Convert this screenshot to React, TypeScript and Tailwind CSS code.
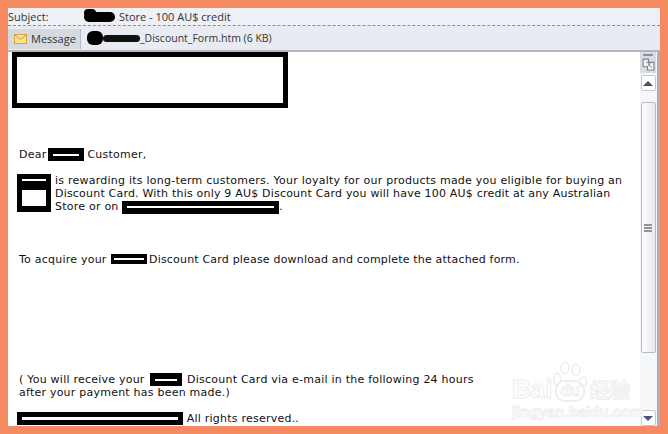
import React from "react";

const Bar = ({ w, h = 13, slit = 2, inset = 5 }: { w: number; h?: number; slit?: number; inset?: number }) => (
  <span
    className="inline-flex items-center bg-black align-middle"
    style={{ width: w, height: h, paddingLeft: inset, paddingRight: inset }}
  >
    <span className="block w-full bg-white" style={{ height: slit }} />
  </span>
);

export default function App() {
  return (
    <div className="w-[668px] h-[434px] bg-[#f58a63] pt-2 pl-2 pr-2 pb-2 overflow-hidden">
      <div className="relative flex h-[418px] flex-col overflow-hidden bg-[#e8ebf1] font-['Open_Sans',sans-serif] text-[#222]">
        <div className="flex h-[18px] items-center border-b border-dashed border-[#8a8f96] bg-[#eef0f5] text-[11px] leading-none">
          <span className="w-[76px] text-[#333]">Subject:</span>
          <span className="relative mr-[4px] h-[10px] w-[31px] rounded-[5px] bg-black">
            <span className="absolute left-0 top-[-3px] h-[8px] w-[12px] rounded-full bg-black" />
          </span>
          <span className="text-[#333]">Store - 100 AU$ credit</span>
        </div>
        <div className="flex h-[26px] items-center border-b-2 border-[#b4b9c0] text-[11px] leading-none">
          <div className="mt-px flex h-[20px] w-[73px] items-center gap-[4px] border-r border-[#b5bac0] bg-[#d5dadf] pl-[6px]">
            <svg width="13" height="10" viewBox="0 0 13 10">
              <rect x="0.5" y="0.5" width="12" height="9" fill="#fde08a" stroke="#d9a441" />
              <path d="M1 1l5.5 4.5L12 1" fill="none" stroke="#c98f2e" />
            </svg>
            <span className="text-[#333]">Message</span>
          </div>
          <span className="ml-[6px] h-[14px] w-[16px] rounded-[6px] bg-black" />
          <span className="h-[7px] w-[37px] rounded-[4px] bg-[#111]" />
          <span className="text-[10.5px] text-[#333]">_Discount_Form.htm (6 KB)</span>
        </div>
        <div className="flex min-h-0 flex-1">
          <div className="min-w-0 flex-1 bg-white font-['DejaVu_Sans',sans-serif] text-[11px] leading-[13px] tracking-[0.23px] text-[#111]">
            <div className="ml-[4px] h-[56px] w-[276px] border-[5px] border-black bg-white" />
            <p className="ml-[11px] mt-[40px] flex h-[13px] items-center">
              Dear <span className="ml-[2px] mr-[3px]"><Bar w={36} h={13} slit={2} inset={5} /></span> Customer,
            </p>
            <div className="mt-[13px] flex">
              <div className="ml-[9px] flex h-[38px] w-[34px] flex-col bg-black px-[5px] pt-[5px]">
                <div className="h-[2px] bg-white" />
                <div className="mt-[9px] h-[16px] bg-white" />
              </div>
              <p className="ml-[4px] w-[575px] whitespace-nowrap">
                <span className="tracking-[0.24px]">is rewarding its long-term customers. Your loyalty for our products made you eligible for buying an</span>
                <br />
                <span className="tracking-[0.2px]">Discount Card. With this only 9 AU$ Discount Card you will have 100 AU$ credit at any Australian</span>
                <br />
                Store or on <Bar w={157} h={13} slit={2} inset={5} />.
              </p>
            </div>
            <p className="ml-[11px] mt-[39px] flex h-[13px] items-center whitespace-pre">
              To acquire your <span className="ml-px -mr-[2px] flex"><Bar w={36} h={10} slit={2} inset={3} /></span>
              <span className="tracking-[0.185px]"> Discount Card please download and complete the attached form.</span>
            </p>
            <p className="ml-[11px] mt-[107px] whitespace-nowrap">
              ( You will receive your <span className="ml-[2px] mr-px inline-flex align-middle"><Bar w={32} h={13} slit={2} inset={5} /></span> Discount Card via e-mail in the following 24 hours
              <br />
              after your payment has been made.)
            </p>
            <p className="ml-[9px] mt-[13px] flex h-[13px] items-center whitespace-pre">
              <Bar w={166} h={13} slit={3} inset={5} /> All rights reserved..
            </p>
          </div>
          <div className="flex w-[20px] flex-col border-r-[3px] border-[#a9aec0] bg-[#f6f7f9] pr-px">
            <div className="flex h-[21px] flex-col items-center bg-[#d7dce4] pt-[2px]">
              <div className="h-[2px] w-[10px] bg-[#8d939c]" />
              <svg className="mt-[2px]" width="13" height="13" viewBox="0 0 12 12">
                <path d="M1 1h5v3h5v7H5V8H1z" fill="#f4f5f7" stroke="#7b8088" />
                <path d="M4 3l5 6M8 4L5 8" stroke="#6a6f77" strokeWidth="0.8" />
              </svg>
            </div>
            <div className="mx-auto mt-[2px] flex h-[16px] w-[15px] items-center justify-center rounded-[2px] border border-[#c4c8cf] bg-white">
              <div className="h-0 w-0 border-x-[5px] border-b-[5px] border-x-transparent border-b-[#4a4f5c]" />
            </div>
            <div className="mx-auto mt-[11px] flex h-[251px] w-[15px] items-center justify-center rounded-[2px] border border-[#b6bac2] bg-gradient-to-r from-[#fdfdfe] to-[#e9ebf0]">
              <div className="flex w-[8px] flex-col gap-[1px]">
                <div className="h-[2px] bg-[#8f949c]" />
                <div className="h-[2px] bg-[#8f949c]" />
                <div className="h-[2px] bg-[#8f949c]" />
              </div>
            </div>
            <div className="flex-1" />
            <div className="mx-auto flex h-[16px] w-[15px] items-center justify-center rounded-[2px] border border-[#c4c8cf] bg-white">
              <div className="h-0 w-0 border-x-[5px] border-t-[5px] border-x-transparent border-t-[#4a5472]" />
            </div>
          </div>
        </div>
        <div className="absolute left-[504px] top-[368px] flex flex-col items-start text-white [-webkit-text-stroke:1px_#ededed]">
          <svg className="absolute left-[40px] top-[-14px]" width="36" height="36" viewBox="0 0 36 36" fill="none" stroke="#ededed" strokeWidth="1.5">
            <ellipse cx="5" cy="17" rx="3.5" ry="5.5" />
            <ellipse cx="13" cy="6" rx="4" ry="5.5" />
            <ellipse cx="24" cy="8" rx="4" ry="5.5" />
            <ellipse cx="31" cy="20" rx="3.5" ry="5" />
          </svg>
          <div className="flex items-end font-['Liberation_Sans',sans-serif] text-[26px] font-bold leading-[26px]">
            <span>Bai</span>
            <span className="ml-[3px] mr-[5px] rounded-[10px] border-2 border-[#ededed] px-[3px] text-[16px] leading-[18px]">du</span>
            <span className="font-['Noto_Sans_CJK_SC',sans-serif] text-[20px] leading-[24px]">经验</span>
          </div>
          <span className="mt-[3px] font-['Liberation_Sans',sans-serif] text-[15px] font-bold leading-[14px]">jingyan.baidu.com</span>
        </div>
      </div>
    </div>
  );
}
